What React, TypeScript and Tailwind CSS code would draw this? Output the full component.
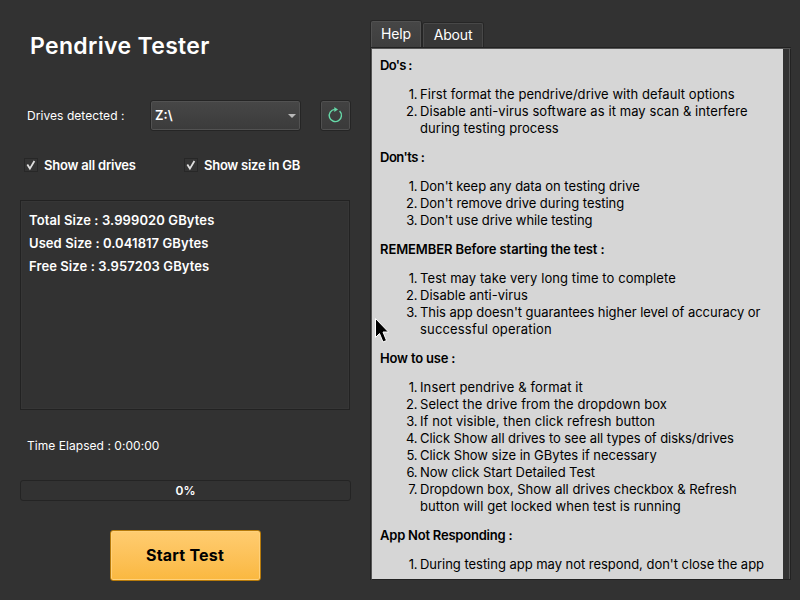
import React from "react";

type Line = { text: string; track: string };
type Section = { title: string; track: string; items: Line[][] };

const sections: Section[] = [
  {
    title: "Do's :",
    track: "tracking-[-0.7px]",
    items: [
      [{ text: "First format the pendrive/drive with default options", track: "tracking-[0.05px]" }],
      [
        { text: "Disable anti-virus software as it may scan & interfere", track: "tracking-[0.075px]" },
        { text: "during testing process", track: "tracking-[0.05px]" },
      ],
    ],
  },
  {
    title: "Don'ts :",
    track: "tracking-[-0.5px]",
    items: [
      [{ text: "Don't keep any data on testing drive", track: "tracking-[-0.06px]" }],
      [{ text: "Don't remove drive during testing", track: "tracking-[-0.04px]" }],
      [{ text: "Don't use drive while testing", track: "tracking-[-0.07px]" }],
    ],
  },
  {
    title: "REMEMBER Before starting the test :",
    track: "tracking-[-0.1px]",
    items: [
      [{ text: "Test may take very long time to complete", track: "tracking-[0.085px]" }],
      [{ text: "Disable anti-virus", track: "tracking-[0.03px]" }],
      [
        { text: "This app doesn't guarantees higher level of accuracy or", track: "tracking-[-0.04px]" },
        { text: "successful operation", track: "tracking-[0.17px]" },
      ],
    ],
  },
  {
    title: "How to use :",
    track: "tracking-[-0.18px]",
    items: [
      [{ text: "Insert pendrive & format it", track: "tracking-[0.12px]" }],
      [{ text: "Select the drive from the dropdown box", track: "tracking-[0.09px]" }],
      [{ text: "If not visible, then click refresh button", track: "tracking-[0.09px]" }],
      [{ text: "Click Show all drives to see all types of disks/drives", track: "tracking-[-0.07px]" }],
      [{ text: "Click Show size in GBytes if necessary", track: "tracking-[-0.03px]" }],
      [{ text: "Now click Start Detailed Test", track: "tracking-[-0.06px]" }],
      [
        { text: "Dropdown box, Show all drives checkbox & Refresh", track: "" },
        { text: "button will get locked when test is running", track: "tracking-[0.05px]" },
      ],
    ],
  },
  {
    title: "App Not Responding :",
    track: "tracking-[-0.22px]",
    items: [[{ text: "During testing app may not respond, don't close the app", track: "tracking-[-0.03px]" }]],
  },
];

function Check({ label, track }: { label: string; track: string }) {
  return (
    <label className="flex w-[160px] items-center gap-[6px]">
      <span className="flex size-[14px] items-center justify-center border border-[#272727] bg-[#343434]">
        <svg width="12" height="12" viewBox="0 0 12 12" fill="none">
          <path d="M2.3 5.5 L4.9 9.6 L9.4 2" stroke="#dedede" strokeWidth="1.8" />
        </svg>
      </span>
      <span className="text-[13px] leading-[18px] font-semibold whitespace-nowrap"><span className={track}>{label}</span></span>
    </label>
  );
}

export default function App() {
  return (
    <div className="relative flex h-[600px] w-[800px] overflow-hidden bg-[#323232] font-['Inter','Liberation_Sans',sans-serif] text-white">
      <main className="flex w-[371px] flex-col pl-5">
        <h1 className="mt-[30px] pl-[10px] text-[23px] leading-[32px] font-semibold tracking-[0.33px] whitespace-nowrap">Pendrive Tester</h1>

        <div className="mt-[38px] flex h-[31px] items-center">
          <span className="w-[130px] pl-[7px] text-[12px] tracking-[0.06px] whitespace-nowrap">Drives detected :</span>
          <div className="flex h-[31px] w-[151px] items-center justify-between rounded-[3px] border border-[#252525] bg-linear-to-b from-[#474747] to-[#3b3b3b] pr-[4px] pl-[4px] inset-ring inset-ring-[#525252]">
            <span className="text-[13px] font-semibold">Z:\</span>
            <svg width="8" height="4" viewBox="0 0 8 4"><path d="M0 0H8L4 4Z" fill="#b8b8b8" /></svg>
          </div>
          <button className="ml-[19px] flex h-[31px] w-[31px] items-center justify-center rounded-[3px] border border-[#252525] bg-linear-to-b from-[#424242] to-[#3a3a3a] pr-[2px] pb-px inset-ring inset-ring-[#505050]">
            <svg width="16" height="16" viewBox="0 0 16 16" fill="none">
              <path d="M12.6 4.1A6.1 6.1 0 1 1 7.8 2.4" stroke="#66d9a8" strokeWidth="1.4" />
              <path d="M7.3 0L11 2.4L7.3 4.9Z" fill="#66d9a8" />
            </svg>
          </button>
        </div>

        <div className="mt-[25px] flex h-[18px] pl-1">
          <Check label="Show all drives" track="tracking-[-0.21px]" />
          <Check label="Show size in GB" track="tracking-[-0.26px]" />
        </div>

        <section className="mt-[26px] h-[210px] w-[330px] border border-[#222222] bg-[#323232] pt-[8px] pl-[8px] text-[13px] leading-[23px] font-semibold inset-ring inset-ring-[#363636]">
          <p className="tracking-[0.1px]">Total Size : 3.999020 GBytes</p>
          <p className="tracking-[0.07px]">Used Size : 0.041817 GBytes</p>
          <p className="tracking-[0.09px]">Free Size : 3.957203 GBytes</p>
        </section>

        <p className="mt-[28px] pl-[7px] text-[12px] leading-[16px] tracking-[0.05px]">Time Elapsed : 0:00:00</p>
        <div className="mt-[26px] flex h-[21px] w-[331px] items-center justify-center rounded-[3px] border border-[#242424] text-[12px] font-semibold">0%</div>
        <button className="mt-[29px] ml-[90px] h-[51px] w-[151px] rounded-[3px] border border-[#b67a0b] bg-linear-to-b from-[#ffcc70] to-[#fab83f] pr-px pb-[2px] text-[16px] font-bold tracking-[0.2px] text-black inset-ring inset-ring-[#ffd17b]">Start Test</button>
      </main>

      <aside className="flex w-[420px] flex-col pt-[21px]">
        <nav className="flex h-[27px] items-end gap-[2px] text-[14px] leading-[20px] tracking-[-0.15px]">
          <div className="flex h-[27px] w-[50px] items-center justify-center rounded-t-[2px] border border-b-0 border-[#515151] bg-linear-to-b from-[#464646] to-[#3e3e3e] pb-[3px] shadow-[0_0_0_1px_#262626]">Help</div>
          <div className="flex h-[25px] w-[60px] items-center justify-center rounded-t-[2px] border border-b-0 border-[#484848] bg-[#373737] pb-[2px] shadow-[0_0_0_1px_#262626]">About</div>
        </nav>
        <div className="h-[532px] border border-[#222222] border-t-[#555555] border-l-[#555555] pr-[7px] shadow-[-1px_0_#222222,0_-1px_#222222] inset-shadow-[-1px_0_#555555]">
          <article className="h-[530px] overflow-hidden bg-[#d6d6d6] pt-[8px] pl-[8px] text-[13px] leading-[17px] text-black">
            {sections.map((s) => (
              <section key={s.title}>
                <h2 className="mb-3 font-semibold whitespace-nowrap"><span className={s.track}>{s.title}</span></h2>
                <ol className="mb-3">
                  {s.items.map((lines, i) => (
                    <li key={i} className="flex gap-[3px]">
                      <span className="w-[37px] text-right tracking-[-0.4px]">{i + 1}.</span>
                      <div className="whitespace-nowrap">
                        {lines.map((l) => (
                          <p key={l.text}><span className={l.track}>{l.text}</span></p>
                        ))}
                      </div>
                    </li>
                  ))}
                </ol>
              </section>
            ))}
          </article>
        </div>
      </aside>

      <svg className="absolute top-[317px] left-[374px]" width="18" height="27" viewBox="0 0 18 27">
        <path d="M1.5 1.5V20.5L5.5 16.5L9 25L12.5 23.5L9 15H14.5Z" fill="#000" stroke="#fff" strokeWidth="1" />
      </svg>
    </div>
  );
}
